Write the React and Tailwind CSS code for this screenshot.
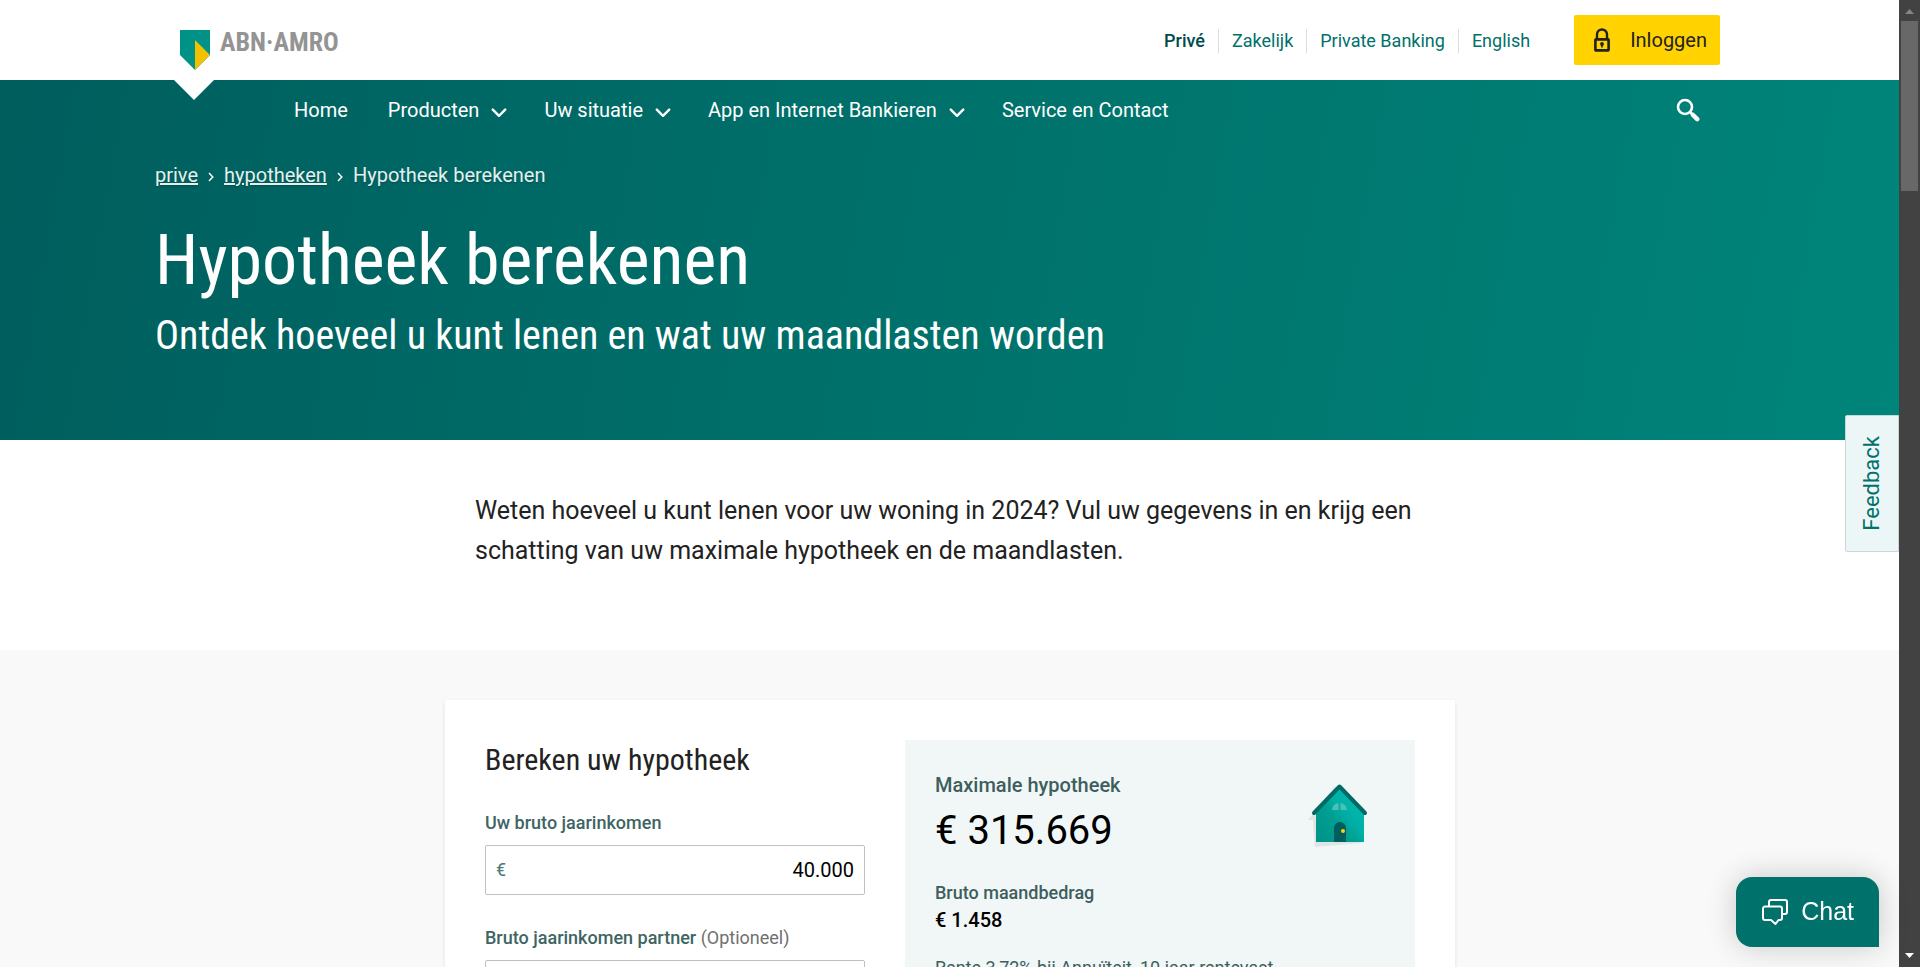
const NAV = [
  { label: "Home" },
  { label: "Producten", menu: true },
  { label: "Uw situatie", menu: true },
  { label: "App en Internet Bankieren", menu: true },
  { label: "Service en Contact" },
];

const condensed = "font-['Roboto_Condensed','Roboto',sans-serif]";

function Logo() {
  return (
    <a href="#" aria-label="ABN AMRO" className="flex items-start gap-2.5">
      <svg width="30" height="40" viewBox="0 0 30 40" aria-hidden="true">
        <path d="M0 0H30V25L15 40L0 25Z" fill="#009286" />
        <path d="M15 10L30 25L15 40Z" fill="#f3c000" />
      </svg>
      <span className={`${condensed} text-[26px] leading-6 font-bold text-[#949494]`}>ABN·AMRO</span>
    </a>
  );
}

function Chevron() {
  return (
    <svg width="16" height="10" viewBox="0 0 16 10" fill="none" aria-hidden="true" className="mt-1.5 -mr-[3px]">
      <path d="M1.8 1.6L8 7.8L14.2 1.6" stroke="#fff" strokeWidth="2.4" strokeLinecap="round" strokeLinejoin="round" />
    </svg>
  );
}

function Crumb() {
  return (
    <svg width="6" height="10" viewBox="0 0 6 10" fill="none" aria-hidden="true" className="mt-1">
      <path d="M1 1L4.8 5L1 9" stroke="#fff" strokeWidth="1.5" />
    </svg>
  );
}

function House() {
  return (
    <svg width="64" height="66" viewBox="0 0 64 66" aria-hidden="true">
      <defs>
        <linearGradient id="wall" x1="0" y1="1" x2="1" y2="0">
          <stop offset="0" stopColor="#009286" />
          <stop offset="0.4" stopColor="#009e93" />
          <stop offset="0.55" stopColor="#00aea4" />
          <stop offset="1" stopColor="#00c0b6" />
        </linearGradient>
      </defs>
      <path d="M1 38L28 4L54 34V61L8 65L6 38Z" fill="#dfe5e5" />
      <path d="M9 31L32 5L57 31V60H9Z" fill="url(#wall)" />
      <path d="M7 31L32.500 4.500L58 31" fill="none" stroke="#006a65" strokeWidth="4" strokeLinecap="round" strokeLinejoin="round" />
      <path d="M25 28A7 7 0 0 1 31.500 21V28ZM33.500 21A7 7 0 0 1 40 28H33.500Z" fill="#4cbfb7" />
      <path d="M27 60V46A6 6 0 0 1 39 46V60Z" fill="#005e5d" />
      <circle cx="36" cy="49" r="2" fill="#ffd200" />
    </svg>
  );
}

function EuroField({ id, label, optional, value }) {
  return (
    <div>
      <label htmlFor={id} className="block text-lg leading-6 font-medium text-[#3e6563]">
        {label}
        {optional && <span className="font-normal text-[#707070]"> (Optioneel)</span>}
      </label>
      <div className="mt-2.5 flex h-[50px] items-center rounded-xs border border-[#c0c0c0] bg-white px-2.5 text-xl">
        <span className="text-lg text-[#4c7a77]">€</span>
        <input id={id} defaultValue={value} className="w-full min-w-0 flex-1 bg-transparent text-right text-black outline-none" />
      </div>
    </div>
  );
}

export default function App() {
  return (
    <div className="flex h-screen overflow-hidden bg-[#f9f9f9] font-['Roboto',sans-serif] text-[#222]">
      <div className="h-full min-w-0 flex-1 overflow-hidden">
        <header className="bg-white">
          <div className="mx-auto flex h-20 max-w-[1540px] items-center justify-between">
            <div className="pt-5">
              <Logo />
            </div>
            <div className="flex items-center">
              <ul className="mt-0.5 flex items-center text-lg leading-6 text-[#00716b]">
                <li className="border-r border-[#dedede] pr-[13px] font-medium text-[#004c4c]"><a href="#">Privé</a></li>
                <li className="border-r border-[#dedede] px-[13px]"><a href="#">Zakelijk</a></li>
                <li className="border-r border-[#dedede] px-[13px]"><a href="#">Private Banking</a></li>
                <li className="pl-[13px]"><a href="#">English</a></li>
              </ul>
              <button className="ml-11 flex h-[50px] items-center gap-5 rounded-xs bg-[#ffd200] pr-[13px] pl-5 text-xl text-[#222]">
                <svg width="16" height="24" viewBox="0 0 16 24" fill="none" aria-hidden="true">
                  <path d="M3 11V6.500A5 5 0 0 1 13 6.500V11" stroke="#222" strokeWidth="2.400" />
                  <rect x="1.400" y="11.400" width="13.200" height="11" rx="0.500" stroke="#222" strokeWidth="2.600" />
                  <circle cx="8" cy="16" r="1.900" fill="#222" />
                  <path d="M7.200 16H8.800V19.500H7.200Z" fill="#222" />
                </svg>
                Inloggen
              </button>
            </div>
          </div>
        </header>

        <section className="h-[360px] bg-[linear-gradient(100deg,#005e5d_0%,#00857a_100%)] text-white">
          <nav className="mx-auto flex h-[60px] max-w-[1540px] items-center justify-between">
            <div className="flex h-full items-center">
              <svg width="40" height="20" viewBox="0 0 40 20" className="-ml-1.5 self-start" aria-hidden="true">
                <path d="M0 0H40L20 20Z" fill="#fff" />
              </svg>
              <ul className="ml-20 flex items-center gap-10 text-xl leading-6">
                {NAV.map((n) => (
                  <li key={n.label}>
                    <a href="#" className="flex items-center gap-3">
                      {n.label}
                      {n.menu && <Chevron />}
                    </a>
                  </li>
                ))}
              </ul>
            </div>
            <button aria-label="Zoeken" className="mr-5">
              <svg width="24" height="24" viewBox="0 0 24 24" fill="none" stroke="#fff" aria-hidden="true">
                <circle cx="9" cy="9" r="7" strokeWidth="2.600" />
                <path d="M14 14L16 16" strokeWidth="2.600" />
                <path d="M17 17L21.200 21.200" strokeWidth="4.500" strokeLinecap="round" />
              </svg>
            </button>
          </nav>
          <div className="mx-auto max-w-[1590px] pt-[23px]">
            <nav aria-label="Kruimelpad" className="flex items-center gap-2.5 text-xl leading-6 text-[#e5f0ef] text-shadow-sm">
              <a href="#" className="underline">prive</a>
              <Crumb />
              <a href="#" className="underline">hypotheken</a>
              <Crumb />
              <span>Hypotheek berekenen</span>
            </nav>
            <h1 className={`${condensed} mt-[33px] text-[70px] leading-[80px]`}>Hypotheek berekenen</h1>
            <p className={`${condensed} mt-3 text-[40px] leading-[48px]`}>
              Ontdek hoeveel u kunt lenen en wat uw maandlasten worden
            </p>
          </div>
        </section>

        <section className="bg-white pt-[51px] pb-[79px]">
          <p className="mx-auto max-w-[950px] text-[25px] leading-10 text-[#222]">
            Weten hoeveel u kunt lenen voor uw woning in 2024? Vul uw gegevens in en krijg een schatting van uw maximale
            hypotheek en de maandlasten.
          </p>
        </section>

        <main className="pt-[50px]">
          <div className="mx-auto grid max-w-[1010px] grid-cols-[380px_1fr] gap-10 rounded-xs bg-white p-10 shadow-[0_2px_4px_rgba(0,0,0,0.1)]">
            <form>
              <h2 className={`${condensed} text-[30px] leading-10`}>Bereken uw hypotheek</h2>
              <div className="mt-[31px] grid gap-[31px]">
                <EuroField id="income" label="Uw bruto jaarinkomen" value="40.000" />
                <EuroField id="partner" label="Bruto jaarinkomen partner" optional />
              </div>
            </form>
            <section className="bg-[#f1f7f7] p-[30px]">
              <div className="flex justify-between">
                <div>
                  <h3 className="text-xl leading-[30px] font-medium text-[#3e5e5e]">Maximale hypotheek</h3>
                  <p className="text-[40px] leading-[62px] text-black">€ 315.669</p>
                </div>
                <div className="mt-3 mr-[14px]">
                  <House />
                </div>
              </div>
              <h3 className="mt-[17px] text-lg leading-7 font-medium text-[#3e5e5e]">Bruto maandbedrag</h3>
              <p className="text-xl leading-[26px] font-medium text-black">€ 1.458</p>
              <p className="mt-[23px] text-lg leading-6 text-[#3e5e5e]">Rente 3,72% bij Annuïteit, 10 jaar rentevast</p>
            </section>
          </div>
        </main>
      </div>

      <div aria-hidden="true" className="relative -ml-px flex w-[21px] flex-col items-center bg-[#424242] px-0.5">
        <svg width="17" height="21" viewBox="0 0 17 21">
          <path d="M4 14L8.500 9L13 14Z" fill="#858585" />
        </svg>
        <div className="h-[170px] w-full bg-[#686868]" />
        <svg width="17" height="20" viewBox="0 0 17 20" className="mt-auto">
          <path d="M4 6L8.500 11L13 6Z" fill="#fff" />
        </svg>
      </div>

      <button className="fixed top-[415px] right-[21px] flex h-[137px] w-[54px] items-center justify-center rounded-l-xs border border-[#c8d8d6] bg-[#edf6f7] pr-0.5 text-[22px] text-[#00716b]">
        <span className="rotate-180 [writing-mode:vertical-rl]">Feedback</span>
      </button>

      <button className="fixed right-[41px] bottom-5 flex h-[70px] items-center gap-3 rounded-2xl rounded-br-none bg-[#00716b] px-[25px] font-['Liberation_Sans',sans-serif] text-[25px] text-white shadow-[0_0_30px_rgba(0,0,0,0.2)]">
        <svg width="28" height="28" viewBox="0 0 28 28" fill="none" stroke="#fff" strokeWidth="2" strokeLinejoin="round" aria-hidden="true">
          <path d="M8 8V4A2 2 0 0 1 10 2H24A2 2 0 0 1 26 4V14A2 2 0 0 1 24 16H21" />
          <path d="M4 8.500H19A2 2 0 0 1 21 10.500V20A2 2 0 0 1 19 22H17.500L14.500 26L10 22H4A2 2 0 0 1 2 20V10.500A2 2 0 0 1 4 8.500Z" />
        </svg>
        Chat
      </button>
    </div>
  );
}
